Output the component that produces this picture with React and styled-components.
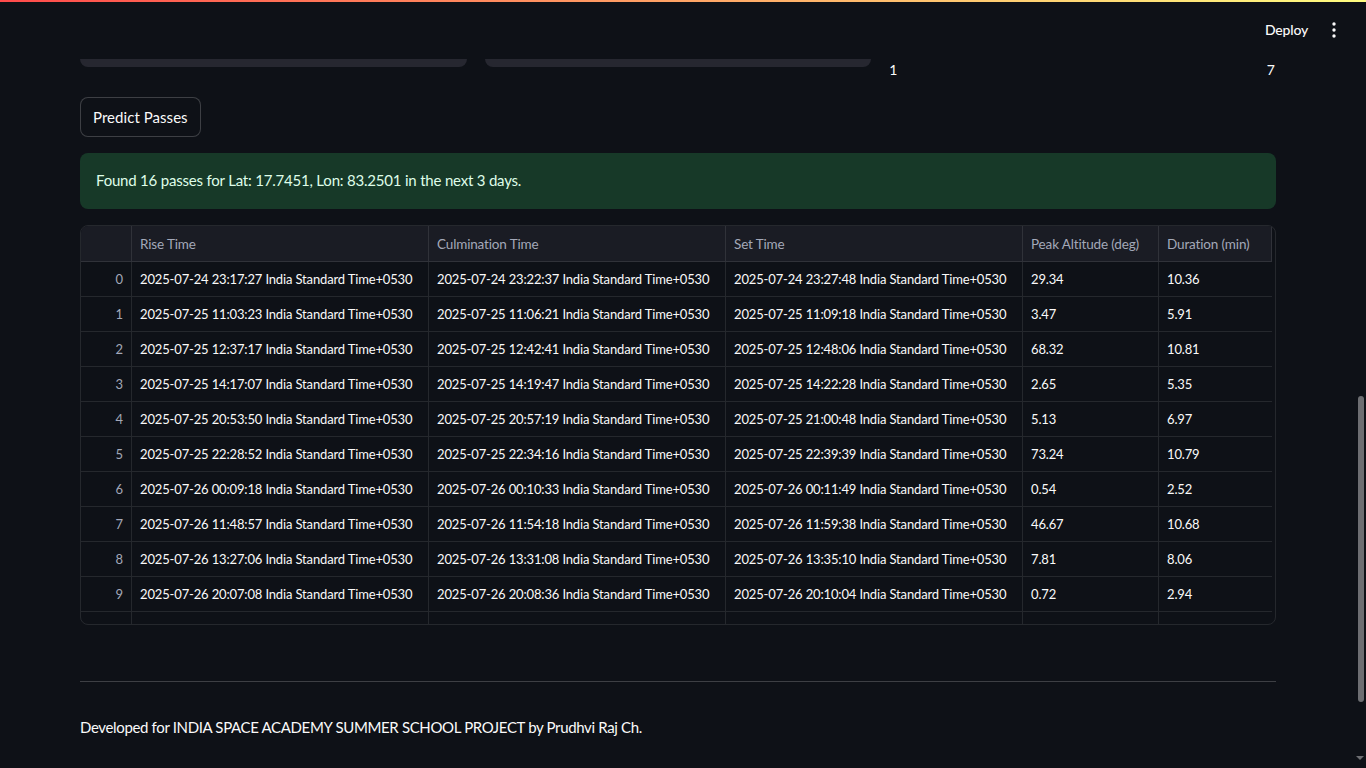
import React from "react";
import styled, { createGlobalStyle } from "styled-components";

const GlobalStyle = createGlobalStyle`
    html, body {
        margin: 0;
        padding: 0;
        background-color: #0e1117;
        overflow: hidden;
    }
    * {
        box-sizing: border-box;
    }
`;

const font = `"Lato", "Noto Sans", sans-serif`;

const Page = styled.div`
    display: flex;
    width: 1366px;
    height: 768px;
    background-color: #0e1117;
    color: #fafafa;
    font-family: ${font};
    position: relative;
    overflow: hidden;
`;

const Decoration = styled.div`
    position: absolute;
    top: 0;
    left: 0;
    right: 0;
    height: 2px;
    background-image: linear-gradient(90deg, #ff4b4b, #fffd80);
    z-index: 2;
`;

const Main = styled.div`
    flex: 1;
    display: flex;
    flex-direction: column;
`;

const Header = styled.header`
    height: 59px;
    flex-shrink: 0;
    display: flex;
    align-items: center;
    justify-content: flex-end;
    gap: 10px;
    padding: 0 8px 0 0;
`;

const DeployButton = styled.div`
    font-size: 14px;
    font-weight: 500;
    letter-spacing: -0.2px;
    color: #fafafa;
    padding: 0 4px;
`;

const Kebab = styled.div`
    width: 24px;
    display: flex;
    justify-content: center;
    color: #fafafa;
`;

const Content = styled.div`
    padding: 0 78px 0 80px;
    display: flex;
    flex-direction: column;
`;

const InputsRow = styled.div`
    display: grid;
    grid-template-columns: 1fr 1fr 1fr;
    gap: 18px;
    height: 30px;
`;

const InputStub = styled.div`
    height: 8px;
    background-color: #262730;
    border-radius: 0 0 8px 8px;
`;

const SliderLabels = styled.div`
    display: flex;
    justify-content: space-between;
    font-size: 14px;
    padding: 4px 1px 0 0;
    line-height: 14px;
`;

const PrimaryButton = styled.button`
    align-self: flex-start;
    height: 40px;
    padding: 0 12px;
    background-color: #0e1117;
    border: 1px solid rgba(250, 250, 250, 0.2);
    border-radius: 8px;
    color: #fafafa;
    font-family: ${font};
    font-size: 15px;
    letter-spacing: 0.05px;
    margin-top: 8px;
`;

const Alert = styled.div`
    margin-top: 16px;
    height: 56px;
    display: flex;
    align-items: center;
    padding: 0 16px 2px;
    background-color: #173928;
    border-radius: 8px;
    color: #dffde9;
    font-size: 15px;
    letter-spacing: -0.2px;
`;

const TableWrap = styled.div`
    margin-top: 16px;
    height: 400px;
    border: 1px solid rgba(250, 250, 250, 0.1);
    border-radius: 8px;
    overflow: hidden;
    padding-right: 3px;
`;

const Grid = styled.div`
    display: grid;
    grid-template-columns: 51px 297px 297px 297px 136px 113px;
    grid-auto-rows: 35px;
    grid-template-rows: 36px;
`;

const HeadCell = styled.div`
    background-color: #1a1c24;
    color: #a3a8b8;
    font-size: 13.5px;
    letter-spacing: -0.15px;
    display: flex;
    align-items: center;
    padding: 0 8px;
    border-right: 1px solid rgba(250, 250, 250, 0.1);
    border-bottom: 1px solid rgba(250, 250, 250, 0.1);
    white-space: nowrap;
    &:last-child {
        border-right: none;
    }
`;

const Cell = styled.div`
    font-size: 13px;
    letter-spacing: -0.15px;
    display: flex;
    align-items: center;
    justify-content: ${(p) => (p.index ? "flex-end" : "flex-start")};
    color: ${(p) => (p.index ? "#a3a8b8" : "#fafafa")};
    padding: 0 8px;
    border-right: ${(p) => (p.last ? "none" : "1px solid rgba(250, 250, 250, 0.1)")};
    border-bottom: 1px solid rgba(250, 250, 250, 0.1);
    white-space: nowrap;
    overflow: hidden;
`;

const Rule = styled.hr`
    margin: 56px 0 0 0;
    border: none;
    border-top: 1px solid rgba(250, 250, 250, 0.2);
`;

const Footer = styled.p`
    margin: 36px 0 0 0;
    font-size: 15px;
    letter-spacing: -0.35px;
    color: #fafafa;
`;

const ScrollTrack = styled.div`
    width: 12px;
    flex-shrink: 0;
    display: flex;
    flex-direction: column;
    align-items: center;
    padding-top: 396px;
`;

const ScrollThumb = styled.div`
    width: 6px;
    height: 306px;
    border-radius: 3px;
    background-color: #6d6e72;
    margin-left: 2px;
`;

const ScrollArrow = styled.div`
    margin-top: 54px;
    width: 0;
    height: 0;
    border-left: 4px solid transparent;
    border-right: 4px solid transparent;
    border-top: 4px solid #6d6e72;
`;

const tz = " India Standard Time+0530";

const passes = [
    ["2025-07-24 23:17:27", "2025-07-24 23:22:37", "2025-07-24 23:27:48", "29.34", "10.36"],
    ["2025-07-25 11:03:23", "2025-07-25 11:06:21", "2025-07-25 11:09:18", "3.47", "5.91"],
    ["2025-07-25 12:37:17", "2025-07-25 12:42:41", "2025-07-25 12:48:06", "68.32", "10.81"],
    ["2025-07-25 14:17:07", "2025-07-25 14:19:47", "2025-07-25 14:22:28", "2.65", "5.35"],
    ["2025-07-25 20:53:50", "2025-07-25 20:57:19", "2025-07-25 21:00:48", "5.13", "6.97"],
    ["2025-07-25 22:28:52", "2025-07-25 22:34:16", "2025-07-25 22:39:39", "73.24", "10.79"],
    ["2025-07-26 00:09:18", "2025-07-26 00:10:33", "2025-07-26 00:11:49", "0.54", "2.52"],
    ["2025-07-26 11:48:57", "2025-07-26 11:54:18", "2025-07-26 11:59:38", "46.67", "10.68"],
    ["2025-07-26 13:27:06", "2025-07-26 13:31:08", "2025-07-26 13:35:10", "7.81", "8.06"],
    ["2025-07-26 20:07:08", "2025-07-26 20:08:36", "2025-07-26 20:10:04", "0.72", "2.94"]
];

const columns = ["", "Rise Time", "Culmination Time", "Set Time", "Peak Altitude (deg)", "Duration (min)"];

const KebabIcon = () => (
    <svg width="4" height="16" viewBox="0 0 4 16">
        <circle cx="2" cy="2" r="1.7" fill="currentColor" />
        <circle cx="2" cy="8" r="1.7" fill="currentColor" />
        <circle cx="2" cy="14" r="1.7" fill="currentColor" />
    </svg>
);

export default function App() {
    return (
        <Page>
            <GlobalStyle />
            <Decoration />
            <Main>
                <Header>
                    <DeployButton>{"Deploy"}</DeployButton>
                    <Kebab>
                        <KebabIcon />
                    </Kebab>
                </Header>
                <Content>
                    <InputsRow>
                        <InputStub />
                        <InputStub />
                        <SliderLabels>
                            <span>{"1"}</span>
                            <span>{"7"}</span>
                        </SliderLabels>
                    </InputsRow>
                    <PrimaryButton>{"Predict Passes"}</PrimaryButton>
                    <Alert>{"Found 16 passes for Lat: 17.7451, Lon: 83.2501 in the next 3 days."}</Alert>
                    <TableWrap>
                        <Grid>
                            {columns.map((c, i) => (
                                <HeadCell key={i}>{c}</HeadCell>
                            ))}
                            {passes.map((row, r) => (
                                <React.Fragment key={r}>
                                    <Cell index>{r}</Cell>
                                    <Cell>{row[0] + tz}</Cell>
                                    <Cell>{row[1] + tz}</Cell>
                                    <Cell>{row[2] + tz}</Cell>
                                    <Cell>{row[3]}</Cell>
                                    <Cell last>{row[4]}</Cell>
                                </React.Fragment>
                            ))}
                            {columns.map((c, i) => (
                                <Cell key={"f" + i} last={i === columns.length - 1} />
                            ))}
                        </Grid>
                    </TableWrap>
                    <Rule />
                    <Footer>{"Developed for INDIA SPACE ACADEMY SUMMER SCHOOL PROJECT by Prudhvi Raj Ch."}</Footer>
                </Content>
            </Main>
            <ScrollTrack>
                <ScrollThumb />
                <ScrollArrow />
            </ScrollTrack>
        </Page>
    );
}
